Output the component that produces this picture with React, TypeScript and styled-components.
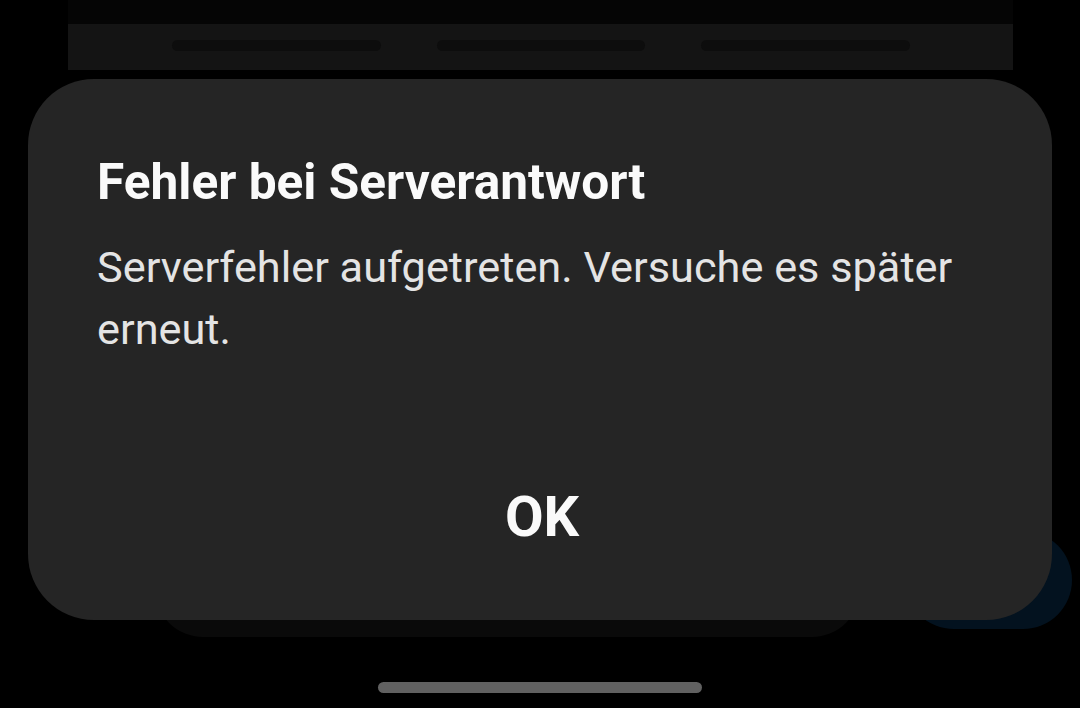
import React from "react";
import styled, { createGlobalStyle } from "styled-components";

const Global = createGlobalStyle`
  html, body { margin: 0; padding: 0; background: #000; }
  body { width: 1080px; height: 708px; overflow: hidden; font-family: Roboto, "Noto Sans", sans-serif; }
`;

const Screen = styled.div`
  position: relative;
  width: 1080px;
  height: 708px;
  background: #000;
  display: flex;
  flex-direction: column;
  overflow: hidden;
`;

const TopPanel = styled.div`
  margin: 0 67px 0 68px;
  display: flex;
  flex-direction: column;
`;

const StatusStrip = styled.div`
  height: 24px;
  background: #050505;
`;

const TabBar = styled.div`
  height: 42px;
  background: #141414;
  display: flex;
  align-items: center;
  padding: 0 103px 4px 104px;
  gap: 56px;
`;

const TabPill = styled.div`
  flex: 1;
  height: 11px;
  border-radius: 6px;
  background: #0d0d0d;
`;

const Spacer = styled.div`
  flex: 1;
`;

const BottomRow = styled.div`
  display: flex;
  align-items: flex-end;
  padding: 0 8px 71px 155px;
`;

const BackCard = styled.div`
  width: 705px;
  height: 120px;
  border-radius: 0 0 48px 48px;
  background: #0a0a0a;
`;

const BackFab = styled.div`
  margin-left: 45px;
  width: 167px;
  height: 98px;
  margin-bottom: 8px;
  border-radius: 50px;
  background: #03121f;
`;

const HomeBar = styled.div`
  position: absolute;
  left: 378px;
  top: 682px;
  width: 324px;
  height: 11px;
  border-radius: 6px;
  background: #616161;
`;

const Dialog = styled.div`
  position: absolute;
  left: 28px;
  top: 79px;
  width: 1024px;
  height: 541px;
  box-sizing: border-box;
  border-radius: 66px;
  background: #252525;
  padding: 75px 69px 0 69px;
  display: flex;
  flex-direction: column;
`;

const Title = styled.h2`
  margin: 0;
  font-family: Roboto, "Noto Sans", sans-serif;
  font-weight: 700;
  font-size: 49.6px;
  line-height: 56px;
  color: #fafafa;
`;

const Message = styled.p`
  margin: 27px 0 0 0;
  font-family: Roboto, "Noto Sans", sans-serif;
  font-weight: 400;
  font-size: 43.3px;
  line-height: 62px;
  color: #e4e4e4;
`;

const Actions = styled.div`
  margin-top: auto;
  height: 133px;
  display: flex;
  justify-content: center;
  align-items: flex-start;
  padding-left: 4px;
`;

const OkButton = styled.button`
  border: none;
  background: transparent;
  padding: 0;
  font-family: Roboto, "Noto Sans", sans-serif;
  font-weight: 700;
  font-size: 56px;
  line-height: 60px;
  color: #fafafa;
  cursor: pointer;
`;

export default function App() {
  return (
    <>
      <Global />
      <Screen>
        <TopPanel>
          <StatusStrip />
          <TabBar>
            <TabPill />
            <TabPill />
            <TabPill />
          </TabBar>
        </TopPanel>
        <Spacer />
        <BottomRow>
          <BackCard />
          <BackFab />
        </BottomRow>
        <HomeBar />
        <Dialog role="dialog">
          <Title>Fehler bei Serverantwort</Title>
          <Message>Serverfehler aufgetreten. Versuche es später erneut.</Message>
          <Actions>
            <OkButton>OK</OkButton>
          </Actions>
        </Dialog>
      </Screen>
    </>
  );
}
